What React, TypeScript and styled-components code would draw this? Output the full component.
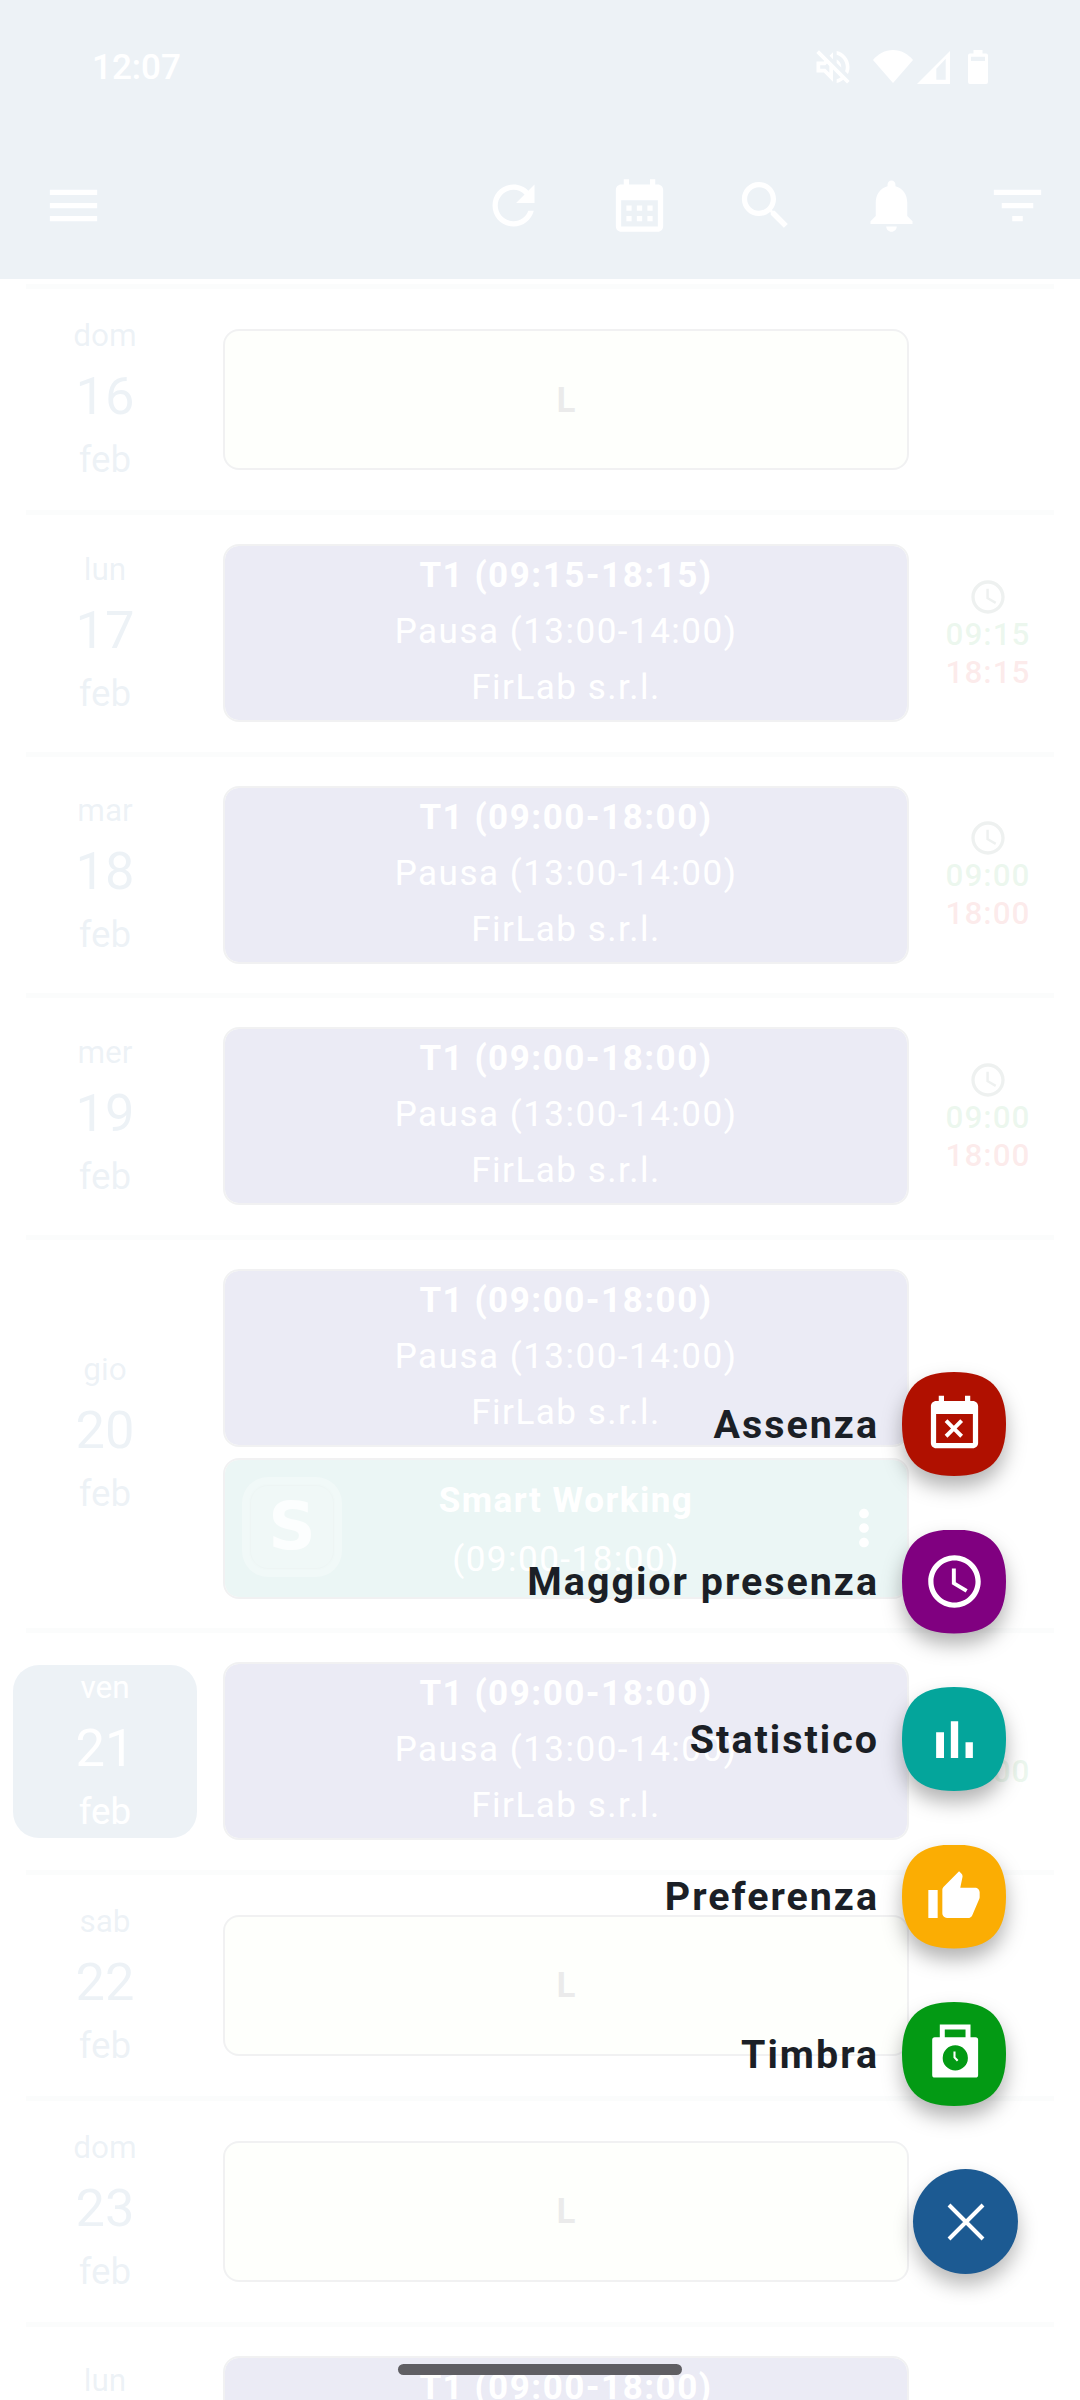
import * as React from 'react';
import styled, { createGlobalStyle } from 'styled-components';

const BLUE = '#1c5a92';

const GlobalStyle = createGlobalStyle`
  html, body {
    margin: 0;
    padding: 0;
    background: #fff;
  }
  * {
    box-sizing: border-box;
  }
`;

const Screen = styled.div`
  position: relative;
  width: 1080px;
  height: 2400px;
  overflow: hidden;
  background: #fff;
  font-family: Roboto, 'Liberation Sans', sans-serif;
`;

const Header = styled.header`
  height: 279px;
  background: ${BLUE};
  color: #fff;
`;

const StatusBar = styled.div`
  height: 134px;
  padding: 0 92px;
  display: flex;
  align-items: center;
  justify-content: space-between;
`;

const Clock = styled.span`
  font-size: 35px;
  font-weight: 500;
`;

const StatusIcons = styled.div`
  display: flex;
  align-items: center;
  gap: 18px;
`;

const SignalGroup = styled.div`
  display: flex;
  align-items: center;
  gap: 4px;
`;

const Toolbar = styled.div`
  height: 142px;
  padding-left: 10px;
  display: flex;
  align-items: center;
`;

const ToolButton = styled.div`
  width: 126px;
  height: 126px;
  display: flex;
  align-items: center;
  justify-content: center;
`;

const Spacer = styled.div`
  flex: 1;
`;

const List = styled.main`
  padding-top: 5px;
`;

const Separator = styled.div`
  height: 5px;
  margin: 0 26px;
  background: #3a4f4f;
  opacity: 0.25;
`;

const Row = styled.section`
  min-height: 221px;
  padding: 0 13px;
  display: flex;
  align-items: center;
`;

const DateBox = styled.div<{ $today?: boolean }>`
  width: 184px;
  margin-right: 26px;
  flex: none;
  border-radius: 26px;
  text-align: center;
  background: ${(p) => (p.$today ? BLUE : 'transparent')};
  color: ${(p) => (p.$today ? '#fff' : BLUE)};
`;

const WeekDay = styled.div`
  font-size: 31.5px;
  line-height: 46px;
`;

const DayNumber = styled.div`
  font-size: 52.5px;
  line-height: 74px;
`;

const Month = styled.div`
  font-size: 36.75px;
  line-height: 53px;
`;

const Cards = styled.div`
  width: 686px;
  flex: none;
  margin: 29.25px 0;
  display: flex;
  flex-direction: column;
  gap: 11px;
`;

const Card = styled.div<{ $height: number; $bg: string }>`
  position: relative;
  height: ${(p) => p.$height}px;
  padding-bottom: 2px;
  border: 2.5px solid #4a545e;
  border-radius: 16px;
  background: ${(p) => p.$bg};
  background-clip: padding-box;
  color: #fff;
  display: flex;
  flex-direction: column;
  align-items: center;
  justify-content: center;
  text-align: center;
`;

const CardTitle = styled.div`
  font-size: 35px;
  font-weight: 700;
  line-height: 56px;
  letter-spacing: 1.5px;
`;

const CardLine = styled.div`
  font-size: 35px;
  line-height: 56px;
  letter-spacing: 1.5px;
`;

const SmartBody = styled.div`
  padding-top: 7px;

  ${CardLine} {
    margin-top: 3px;
  }
`;

const RestLabel = styled.div`
  margin-top: 3px;
  font-size: 35px;
  font-weight: 700;
  color: #000;
`;

const Logo = styled.div`
  position: absolute;
  left: 17px;
  top: 17px;
  width: 100px;
  height: 100px;
  border-radius: 26px;
  border: 7px solid rgba(255, 255, 255, 0.3);
  outline: 1.5px solid rgba(0, 80, 60, 0.4);
  outline-offset: -9px;
  background: rgba(255, 255, 255, 0.25);
  background-clip: padding-box;
  color: rgba(255, 255, 255, 0.8);
  display: flex;
  align-items: center;
  justify-content: center;
  font-family: 'DejaVu Sans', sans-serif;
  font-weight: 700;
  font-size: 66px;
`;

const MoreButton = styled.div`
  position: absolute;
  right: 14px;
  top: 39px;
  height: 58px;
  display: flex;
`;

const TimeColumn = styled.div`
  flex: 1;
  margin-top: 3px;
  display: flex;
  flex-direction: column;
  align-items: center;
`;

const ClockIconWrap = styled.div`
  height: 38px;
  display: flex;
  align-items: center;
  color: #2d4a44;
`;

const Time = styled.div<{ $out?: boolean }>`
  font-size: 31.5px;
  font-weight: 500;
  line-height: 38px;
  letter-spacing: 1px;
  color: ${(p) => (p.$out ? '#d00000' : '#109a30')};
`;

const Scrim = styled.div`
  position: absolute;
  inset: 0;
  background: rgba(255, 255, 255, 0.92);
`;

const FabStack = styled.div`
  position: absolute;
  right: 62px;
  bottom: 126px;
  display: flex;
  flex-direction: column;
  align-items: flex-end;
`;

const ActionRow = styled.div`
  display: flex;
  align-items: center;
  gap: 23px;
  margin-right: 12px;
  margin-bottom: 53.5px;
`;

const ActionLabel = styled.span`
  font-size: 39.4px;
  font-weight: 700;
  letter-spacing: 2px;
  color: #1b1f26;
`;

const ActionShadow = styled.div`
  filter: drop-shadow(0 11px 10px rgba(0, 0, 0, 0.3));
`;

const ActionButton = styled.div<{ $bg: string }>`
  width: 104px;
  height: 104px;
  clip-path: path('M52 0C88 0 104 16 104 52C104 88 88 104 52 104C16 104 0 88 0 52C0 16 16 0 52 0Z');
  background: ${(p) => p.$bg};
  color: #fff;
  display: flex;
  align-items: center;
  justify-content: center;
`;

const CloseFab = styled.div`
  width: 105px;
  height: 105px;
  margin-top: 9.5px;
  border-radius: 50%;
  background: ${BLUE};
  color: #fff;
  box-shadow: 0 11px 20px rgba(0, 0, 0, 0.28);
  display: flex;
  align-items: center;
  justify-content: center;
`;

const HomeBar = styled.div`
  position: absolute;
  left: 398px;
  top: 2364px;
  width: 284px;
  height: 11px;
  border-radius: 6px;
  background: #5f5e63;
`;

const Icon: React.FC<{ d: string; size?: number }> = ({ d, size = 63 }) => (
  <svg width={size} height={size} viewBox="0 0 24 24" fill="currentColor">
    <path d={d} />
  </svg>
);

const paths = {
  menu: 'M3 18h18v-2H3v2zm0-5h18v-2H3v2zm0-7v2h18V6H3z',
  refresh:
    'M17.65 6.35C16.2 4.9 14.21 4 12 4c-4.42 0-7.99 3.58-7.99 8s3.57 8 7.99 8c3.73 0 6.84-2.55 7.73-6h-2.08c-.82 2.33-3.04 4-5.65 4-3.31 0-6-2.69-6-6s2.69-6 6-6c1.66 0 3.14.69 4.22 1.78L13 11h7V4l-2.35 2.35z',
  calendar:
    'M19 4h-1V2h-2v2H8V2H6v2H5c-1.1 0-2 .9-2 2v14c0 1.1.9 2 2 2h14c1.1 0 2-.9 2-2V6c0-1.1-.9-2-2-2zm0 16H5V10h14v10zM9 14H7v-2h2v2zm4 0h-2v-2h2v2zm4 0h-2v-2h2v2zm-8 4H7v-2h2v2zm4 0h-2v-2h2v2zm4 0h-2v-2h2v2z',
  search:
    'M15.5 14h-.79l-.28-.27C15.41 12.59 16 11.11 16 9.5 16 5.91 13.09 3 9.5 3S3 5.91 3 9.5 5.91 16 9.5 16c1.61 0 3.09-.59 4.23-1.57l.27.28v.79l5 4.99L20.49 19l-4.99-5zm-6 0C7.01 14 5 11.99 5 9.5S7.01 5 9.5 5 14 7.01 14 9.5 11.99 14 9.5 14z',
  bell: 'M12 22c1.1 0 2-.9 2-2h-4c0 1.1.89 2 2 2zm6-6v-5c0-3.07-1.64-5.64-4.5-6.32V4c0-.83-.67-1.5-1.5-1.5s-1.5.67-1.5 1.5v.68C7.63 5.36 6 7.92 6 11v5l-2 2v1h16v-1l-2-2z',
  filter: 'M10 18h4v-2h-4v2zM3 6v2h18V6H3zm3 7h12v-2H6v2z',
  eventBusy:
    'M9.31 17l2.44-2.44L14.19 17l1.06-1.06-2.44-2.44 2.44-2.44L14.19 10l-2.44 2.44L9.31 10l-1.06 1.06 2.44 2.44-2.44 2.44L9.31 17zM19 3h-1V1h-2v2H8V1H6v2H5c-1.11 0-1.99.9-1.99 2L3 19c0 1.1.89 2 2 2h14c1.1 0 2-.9 2-2V5c0-1.1-.9-2-2-2zm0 16H5V8h14v11z',
  schedule:
    'M11.99 2C6.47 2 2 6.48 2 12s4.47 10 9.99 10C17.52 22 22 17.52 22 12S17.52 2 11.99 2zM12 20c-4.42 0-8-3.58-8-8s3.58-8 8-8 8 3.58 8 8-3.58 8-8 8zm.5-13H11v6l5.25 3.15.75-1.23-4.5-2.67z',
  chart: 'M5 9.2h3V19H5zM10.6 5h2.8v14h-2.8zm5.6 8H19v6h-2.8z',
  thumb:
    'M1 21h4V9H1v12zm22-11c0-1.1-.9-2-2-2h-6.31l.95-4.57.03-.32c0-.41-.17-.79-.44-1.06L14.17 1 7.59 7.59C7.22 7.95 7 8.45 7 9v10c0 1.1.9 2 2 2h9c.83 0 1.54-.5 1.84-1.22l3.02-7.05c.09-.23.14-.47.14-.73v-2z',
  moreVert:
    'M12 8c1.1 0 2-.9 2-2s-.9-2-2-2-2 .9-2 2 .9 2 2 2zm0 2c-1.1 0-2 .9-2 2s.9 2 2 2 2-.9 2-2-.9-2-2-2zm0 6c-1.1 0-2 .9-2 2s.9 2 2 2 2-.9 2-2-.9-2-2-2z',
  muted:
    'M4.34 2.93L2.93 4.34 7.29 8.7 7 9H3v6h4l5 5v-6.59l4.18 4.18c-.65.49-1.38.88-2.18 1.11v2.06c1.34-.3 2.57-.92 3.61-1.75l2.05 2.05 1.41-1.41L4.34 2.93zM10 15.17L7.83 13H5v-2h2.83l.88-.88L10 11.41v3.76zM19 12c0 .82-.15 1.61-.41 2.34l1.53 1.53c.56-1.17.88-2.48.88-3.87 0-4.28-2.99-7.86-7-8.77v2.06c2.89.86 5 3.54 5 6.71zm-7-8l-1.88 1.88L12 7.76zm4.5 8c0-1.77-1.02-3.29-2.5-4.03v1.79l2.48 2.48c.01-.08.02-.16.02-.24z',
};

const WifiIcon = () => (
  <svg width="40" height="34" viewBox="0 0 40 34" fill="#fff">
    <path d="M20 33 0 10C5 4 12 0 20 0s15 4 20 10z" />
  </svg>
);

const SignalIcon = () => (
  <svg width="33" height="33" viewBox="0 0 33 33" fill="#fff" fillRule="evenodd">
    <path d="M0 33 33 0v33zM19.3 28.7h9.4V7.7l-9.4 10z" />
  </svg>
);

const BatteryIcon = () => (
  <svg width="20" height="34" viewBox="0 0 20 34" fill="#fff" fillRule="evenodd">
    <path d="M5.5 0h9v3.5H18a2 2 0 0 1 2 2V32a2 2 0 0 1-2 2H2a2 2 0 0 1-2-2V5.500a2 2 0 0 1 2-2h3.500zM3 6.700V11h14V6.700z" />
  </svg>
);

const StampIcon = () => (
  <svg width="63" height="63" viewBox="0 0 24 24" fill="#fff" fillRule="evenodd">
    <path d="M6.400.6h11.700v4.800H20a1 1 0 0 1 1 1v13.400a1 1 0 0 1-1 1H4.500a1 1 0 0 1-1-1V6.400a1 1 0 0 1 1-1h1.900zM8.300 2.500v2.900h7.900V2.500zM12.300 8.500a4.800 4.800 0 1 0 0 9.600 4.800 4.800 0 0 0 0-9.600z" />
    <path d="M12 10.900v2.200l1.200 1.300" fill="none" stroke="#fff" strokeWidth="0.8" />
  </svg>
);

const CloseIcon = () => (
  <svg width="40" height="40" viewBox="0 0 40 40" stroke="#fff" strokeWidth="4" fill="none">
    <path d="M3 3l34 34M37 3 3 37" />
  </svg>
);

type Shift = { kind: 'shift'; title: string };
type Smart = { kind: 'smart' };
type Rest = { kind: 'rest' };

interface Day {
  week: string;
  day: number;
  today?: boolean;
  cards: (Shift | Smart | Rest)[];
  times?: { in: string; out?: string };
}

const SHIFT_NINE: Shift = { kind: 'shift', title: 'T1 (09:00-18:00)' };

const days: Day[] = [
  { week: 'dom', day: 16, cards: [{ kind: 'rest' }] },
  {
    week: 'lun',
    day: 17,
    cards: [{ kind: 'shift', title: 'T1 (09:15-18:15)' }],
    times: { in: '09:15', out: '18:15' },
  },
  { week: 'mar', day: 18, cards: [SHIFT_NINE], times: { in: '09:00', out: '18:00' } },
  { week: 'mer', day: 19, cards: [SHIFT_NINE], times: { in: '09:00', out: '18:00' } },
  { week: 'gio', day: 20, cards: [SHIFT_NINE, { kind: 'smart' }] },
  { week: 'ven', day: 21, today: true, cards: [SHIFT_NINE], times: { in: '09:00' } },
  { week: 'sab', day: 22, cards: [{ kind: 'rest' }] },
  { week: 'dom', day: 23, cards: [{ kind: 'rest' }] },
  { week: 'lun', day: 24, cards: [SHIFT_NINE] },
];

const actions = [
  { label: 'Assenza', color: '#b01000', icon: <Icon d={paths.eventBusy} /> },
  { label: 'Maggior presenza', color: '#800080', icon: <Icon d={paths.schedule} /> },
  { label: 'Statistico', color: '#04a59b', icon: <Icon d={paths.chart} /> },
  { label: 'Preferenza', color: '#fbad03', icon: <Icon d={paths.thumb} size={56} /> },
  { label: 'Timbra', color: '#039a14', icon: <StampIcon /> },
];

const DayCard: React.FC<{ card: Shift | Smart | Rest }> = ({ card }) => {
  if (card.kind === 'rest') {
    return (
      <Card $height={141} $bg="#e8fbd0">
        <RestLabel>L</RestLabel>
      </Card>
    );
  }
  if (card.kind === 'smart') {
    return (
      <Card $height={141} $bg="#008a7a">
        <Logo>S</Logo>
        <SmartBody>
          <CardTitle>Smart Working</CardTitle>
          <CardLine>(09:00-18:00)</CardLine>
        </SmartBody>
        <MoreButton>
          <Icon d={paths.moreVert} size={58} />
        </MoreButton>
      </Card>
    );
  }
  return (
    <Card $height={178} $bg="#000080">
      <CardTitle>{card.title}</CardTitle>
      <CardLine>Pausa (13:00-14:00)</CardLine>
      <CardLine>FirLab s.r.l.</CardLine>
    </Card>
  );
};

export default function App() {
  return (
    <Screen>
      <GlobalStyle />
      <Header>
        <StatusBar>
          <Clock>12:07</Clock>
          <StatusIcons>
            <Icon d={paths.muted} size={44} />
            <SignalGroup>
              <WifiIcon />
              <SignalIcon />
            </SignalGroup>
            <BatteryIcon />
          </StatusIcons>
        </StatusBar>
        <Toolbar>
          <ToolButton>
            <Icon d={paths.menu} />
          </ToolButton>
          <Spacer />
          <ToolButton>
            <Icon d={paths.refresh} />
          </ToolButton>
          <ToolButton>
            <Icon d={paths.calendar} />
          </ToolButton>
          <ToolButton>
            <Icon d={paths.search} />
          </ToolButton>
          <ToolButton>
            <Icon d={paths.bell} />
          </ToolButton>
          <ToolButton>
            <Icon d={paths.filter} />
          </ToolButton>
        </Toolbar>
      </Header>
      <List>
        {days.map((d) => (
          <React.Fragment key={`${d.week}-${d.day}`}>
            <Separator />
            <Row>
              <DateBox $today={d.today}>
                <WeekDay>{d.week}</WeekDay>
                <DayNumber>{d.day}</DayNumber>
                <Month>feb</Month>
              </DateBox>
              <Cards>
                {d.cards.map((c, i) => (
                  <DayCard key={i} card={c} />
                ))}
              </Cards>
              {d.times && (
                <TimeColumn>
                  <ClockIconWrap>
                    <Icon d={paths.schedule} size={40} />
                  </ClockIconWrap>
                  <Time>{d.times.in}</Time>
                  {d.times.out && <Time $out>{d.times.out}</Time>}
                </TimeColumn>
              )}
            </Row>
          </React.Fragment>
        ))}
      </List>
      <Scrim />
      <FabStack>
        {actions.map((a) => (
          <ActionRow key={a.label}>
            <ActionLabel>{a.label}</ActionLabel>
            <ActionShadow>
              <ActionButton $bg={a.color}>{a.icon}</ActionButton>
            </ActionShadow>
          </ActionRow>
        ))}
        <CloseFab>
          <CloseIcon />
        </CloseFab>
      </FabStack>
      <HomeBar />
    </Screen>
  );
}
